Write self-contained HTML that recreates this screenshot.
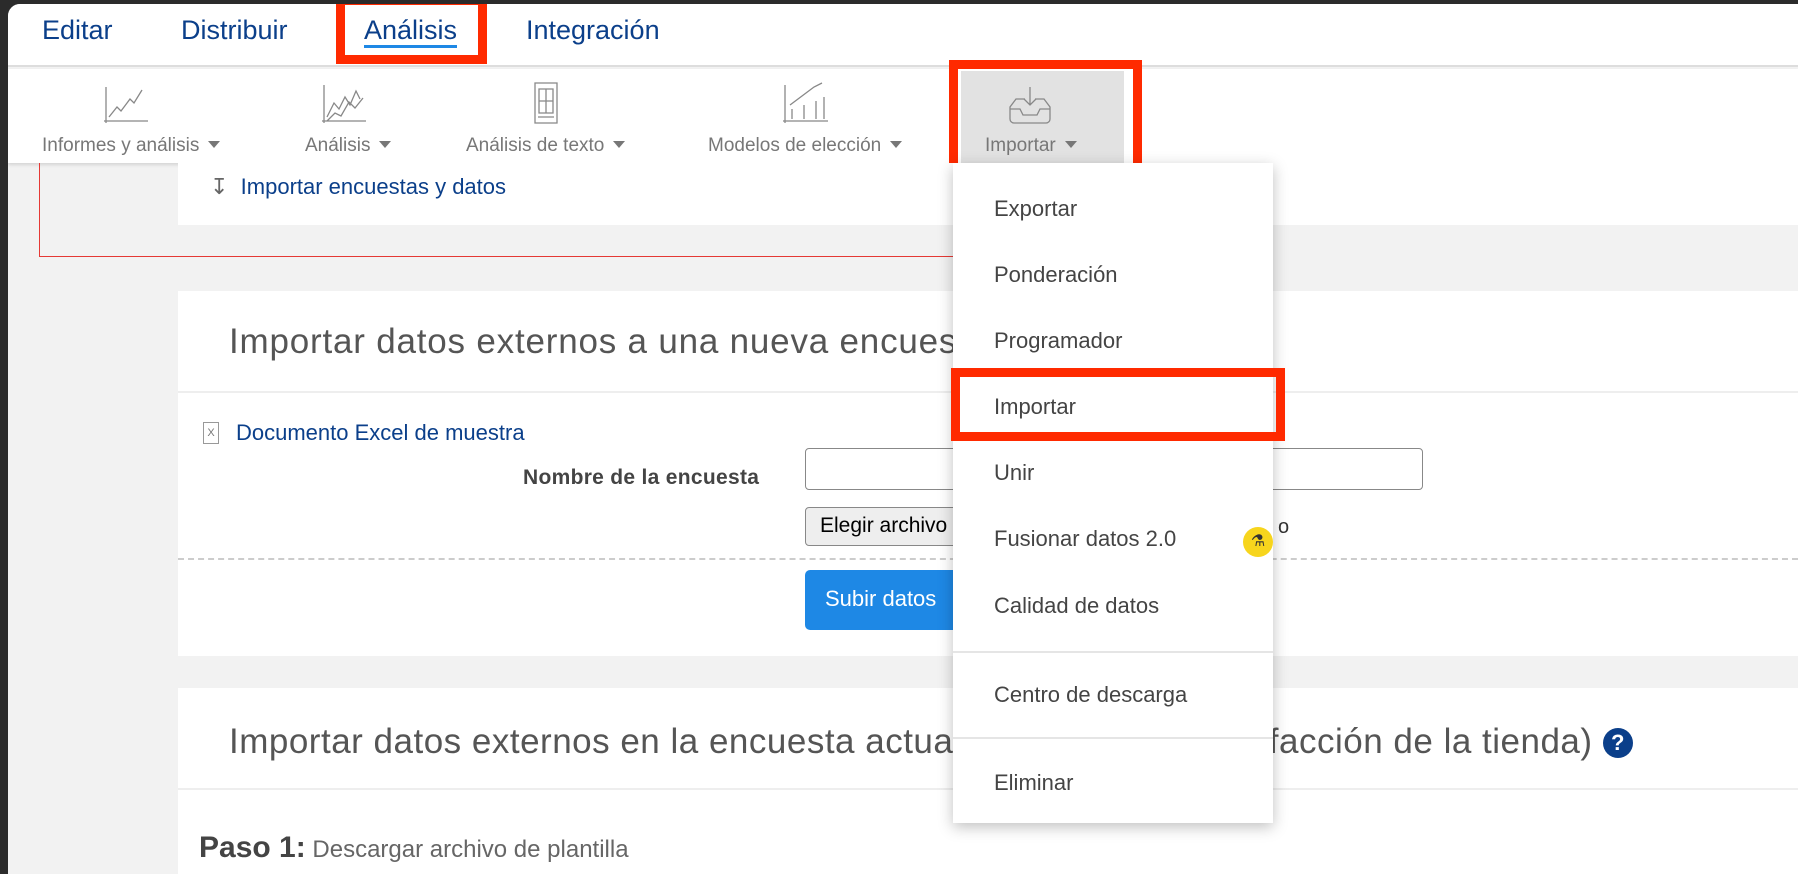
<!DOCTYPE html>
<html><head><meta charset="utf-8"><style>
*{margin:0;padding:0;box-sizing:border-box}
body{width:1798px;height:874px;overflow:hidden;background:#2b2b2b;font-family:"Liberation Sans",sans-serif;position:relative}
.win{position:absolute;left:8px;top:4px;right:0;bottom:0;background:#f2f2f2;border-top-left-radius:12px;overflow:hidden}
.a{position:absolute}
.top{left:0;top:0;right:0;height:63px;background:#fff;border-bottom:2px solid #ddd}
.tab{position:absolute;top:11px;font-size:27px;color:#0b3f8a}
.tb{left:0;top:65px;right:0;height:94px;background:#fff;box-shadow:0 2px 3px rgba(0,0,0,.12)}
.lbl{position:absolute;top:131px;font-size:19px;color:#777;white-space:nowrap}
.lbl:after{content:"";display:inline-block;margin-left:9px;border:6px solid transparent;border-top:7px solid #777;vertical-align:-3px}
.red{position:absolute;border:9px solid #ff2a00}
.menu{left:945px;top:159px;width:320px;height:660px;background:#fff;box-shadow:0 4px 14px rgba(0,0,0,.25)}
.mi{position:absolute;left:41px;font-size:22px;color:#444}
.hd{font-size:35px;color:#555;font-weight:300;white-space:nowrap}
</style></head><body><div class="win">
<div class="a top"></div>
<div class="tab" style="left:34px">Editar</div>
<div class="tab" style="left:173px">Distribuir</div>
<div class="tab" style="left:356px;border-bottom:3px solid #1e88e5;line-height:30px">Análisis</div>
<div class="tab" style="left:518px">Integración</div>
<div class="red" style="left:328px;top:-8px;width:151px;height:68px"></div>
<div class="a tb"></div>
<div class="a" style="left:953px;top:67px;width:163px;height:92px;background:#e2e2e2"></div>
<svg class="a" style="left:0;top:65px" width="1140" height="60" fill="none" stroke="#888" stroke-width="1.3">
<path d="M98 18v36M96 52h44M101 48l8-10 4 4 9-12 4 4 8-13"/>
<path d="M316 16v38M314 52h44M319 48l7-14 5 6 6-12 5 8 6-14 4 8M319 52l8-8 6 3 8-14 6 6 8-10"/>
<path d="M527 14h22v40h-22zM531 20h14v24h-14zM538 20v24M531 32h14M530 48h16"/>
<path d="M777 16v38M775 52h45M784 50v-10M796 50v-14M808 50v-18M816 50v-22M782 36l8-6 8-6 8-6 8-4"/>
<path d="M1017 30h-9l-6 8v12a4 4 0 0 0 4 4h32a4 4 0 0 0 4-4V38l-6-8h-9M1002 40h10l3 6h14l3-6h10M1022 18v18M1016 30l6 6 6-6"/>
</svg>
<div class="lbl" style="left:34px">Informes y análisis</div>
<div class="lbl" style="left:297px">Análisis</div>
<div class="lbl" style="left:458px">Análisis de texto</div>
<div class="lbl" style="left:700px">Modelos de elección</div>
<div class="lbl" style="left:977px">Importar</div>
<div class="red" style="left:941px;top:56px;width:193px;height:114px"></div>
<div class="a" style="left:31px;top:159px;width:1150px;height:94px;border:1px solid #e53935;border-top:none"></div>
<div class="a" style="left:170px;top:159px;right:0;height:62px;background:#fff"></div>
<div class="a" style="left:202px;top:170px;font-size:22px;color:#0b3f8a"><span style="color:#666">↧</span>&nbsp; Importar encuestas y datos</div>
<div class="a" style="left:170px;top:287px;right:0;height:365px;background:#fff"></div>
<div class="a hd" style="left:221px;top:318px;letter-spacing:0.8px">Importar datos externos a una nueva encuesta</div>
<div class="a" style="left:170px;top:387px;right:0;height:2px;background:#eee"></div>
<div class="a" style="left:195px;top:418px;width:16px;height:22px;border:1px solid #999;font-size:11px;color:#777;text-align:center;line-height:20px">X</div>
<div class="a" style="left:228px;top:416px;font-size:22px;color:#0b3f8a">Documento Excel de muestra</div>
<div class="a" style="left:515px;top:462px;font-size:21px;font-weight:bold;color:#444;letter-spacing:0.3px">Nombre de la encuesta</div>
<div class="a" style="left:797px;top:444px;width:618px;height:42px;border:1.5px solid #888;border-radius:4px;background:#fff"></div>
<div class="a" style="left:797px;top:503px;width:180px;height:39px;border:1.5px solid #888;border-radius:4px;background:#eee;font-size:21px;padding:6px 14px">Elegir archivo</div>
<div class="a" style="left:1270px;top:512px;font-size:20px;color:#333">o</div>
<div class="a" style="left:170px;top:554px;right:0;border-top:2px dashed #ccc"></div>
<div class="a" style="left:797px;top:566px;width:200px;height:60px;border-radius:5px;background:#1e88e5;color:#fff;font-size:22px;padding:16px 20px">Subir datos</div>
<div class="a" style="left:170px;top:684px;right:0;height:200px;background:#fff"></div>
<div class="a hd" style="left:221px;top:718px;letter-spacing:0.5px">Importar datos externos en la encuesta actual (Encuesta de satisfacción de la tienda) <span style="display:inline-block;width:30px;height:30px;border-radius:50%;background:#0b3f8a;color:#fff;font-size:22px;font-weight:bold;text-align:center;line-height:30px;vertical-align:3px;letter-spacing:0">?</span></div>
<div class="a" style="left:170px;top:784px;right:0;height:2px;background:#eee"></div>
<div class="a" style="left:191px;top:827px;font-size:24px;color:#666"><b style="font-size:30px;color:#444">Paso 1:</b> Descargar archivo de plantilla</div>
<div class="a menu">
<div class="mi" style="top:33px">Exportar</div>
<div class="mi" style="top:99px">Ponderación</div>
<div class="mi" style="top:165px">Programador</div>
<div class="mi" style="top:231px">Importar</div>
<div class="mi" style="top:297px">Unir</div>
<div class="mi" style="top:363px">Fusionar datos 2.0</div>
<div class="a" style="left:290px;top:364px;width:30px;height:30px;border-radius:50%;background:#f7d51d;color:#333;font-size:16px;text-align:center;line-height:30px">⚗</div>
<div class="mi" style="top:430px">Calidad de datos</div>
<div class="a" style="left:0;right:0;top:488px;height:2px;background:#e5e5e5"></div>
<div class="mi" style="top:519px">Centro de descarga</div>
<div class="a" style="left:0;right:0;top:574px;height:2px;background:#e5e5e5"></div>
<div class="mi" style="top:607px">Eliminar</div>
</div>
<div class="red" style="left:943px;top:364px;width:334px;height:73px"></div>
</div></body></html>
